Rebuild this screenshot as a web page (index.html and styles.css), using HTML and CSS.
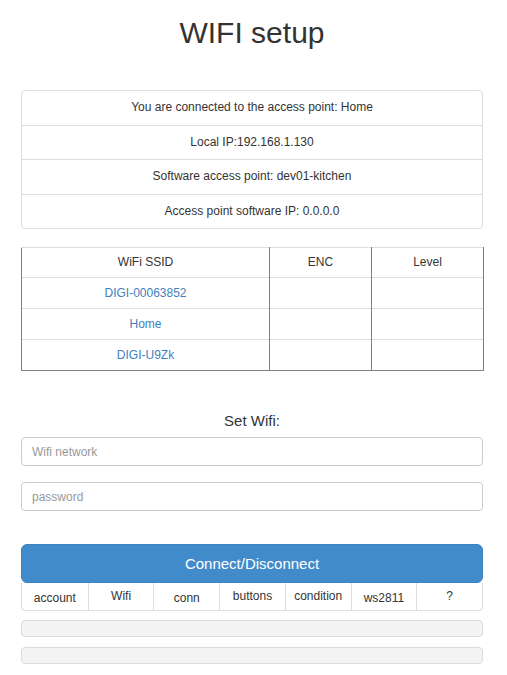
FILE: index.html
```html
<!DOCTYPE html>
<html>
<head>
<meta charset="utf-8">
<link rel="stylesheet" href="styles.css">
</head>
<body>
<div class="page">
  <h1 class="title">WIFI setup</h1>
  <ul class="info">
    <li>You are connected to the access point: Home</li>
    <li>Local IP:192.168.1.130</li>
    <li>Software access point: dev01-kitchen</li>
    <li>Access point software IP: 0.0.0.0</li>
  </ul>
  <table class="nets">
    <colgroup><col class="c1"><col class="c2"><col class="c3"></colgroup>
    <tr><td>WiFi SSID</td><td>ENC</td><td>Level</td></tr>
    <tr><td><a href="#">DIGI-00063852</a></td><td></td><td></td></tr>
    <tr><td><a href="#">Home</a></td><td></td><td></td></tr>
    <tr><td><a href="#">DIGI-U9Zk</a></td><td></td><td></td></tr>
  </table>
  <div class="setlabel">Set Wifi:</div>
  <input class="field" type="text" placeholder="Wifi network">
  <input class="field second" type="password" placeholder="password">
  <button class="connect">Connect/Disconnect</button>
  <div class="tabs">
    <span class="tab">account</span>
    <span class="tab up">Wifi</span>
    <span class="tab">conn</span>
    <span class="tab up">buttons</span>
    <span class="tab up">condition</span>
    <span class="tab">ws2811</span>
    <span class="tab up">?</span>
  </div>
  <div class="bar first"></div>
  <div class="bar"></div>
</div>
</body>
</html>
```
FILE: styles.css
```css
html, body {
  margin: 0;
  padding: 0;
  background: #fff;
}
body {
  font-family: "Liberation Sans", Arial, sans-serif;
  font-size: 12px;
  color: #333;
}
.page {
  width: 462px;
  margin-left: 21px;
  padding-bottom: 10px;
}
.title {
  margin: 16px 0 0;
  font-size: 30px;
  line-height: 33px;
  font-weight: normal;
  text-align: center;
  color: #333;
}
.info {
  list-style: none;
  margin: 41px 0 0;
  padding: 0;
  border: 1px solid #ddd;
  border-radius: 4px;
}
.info li {
  text-align: center;
  padding: 8px 15px;
  line-height: 17.5px;
  border-top: 1px solid #ddd;
}
.info li:first-child {
  border-top: none;
}
.nets {
  margin-top: 18px;
  width: 462px;
  border-collapse: collapse;
  table-layout: fixed;
}
.c1 { width: 248px; }
.c2 { width: 102px; }
.c3 { width: 112px; }
.nets td {
  text-align: center;
  padding: 6px 8px;
  line-height: 18px;
  border-top: 1px solid #ddd;
  border-left: 1px solid #808080;
  border-right: 1px solid #808080;
}
.nets tr:first-child td {
  padding-top: 5px;
}
.nets tr:last-child td {
  border-bottom: 1px solid #808080;
}
.nets a {
  color: #3f80c0;
  text-decoration: none;
}
.setlabel {
  margin-top: 40px;
  text-align: center;
  font-size: 15px;
  line-height: 20px;
}
.field {
  display: block;
  box-sizing: border-box;
  width: 462px;
  height: 29px;
  margin: 6px 0 0;
  padding: 0 10px;
  border: 1px solid #ccc;
  border-radius: 4px;
  font-family: "Liberation Sans", Arial, sans-serif;
  font-size: 12px;
  color: #555;
  background: #fff;
}
.field::placeholder {
  color: #999;
}
.field.second {
  margin-top: 16px;
}
.connect {
  display: block;
  box-sizing: border-box;
  width: 462px;
  height: 39px;
  margin-top: 33px;
  border: 1px solid #3c84c4;
  border-radius: 6px;
  background: #428bca;
  color: #fff;
  font-family: "Liberation Sans", Arial, sans-serif;
  font-size: 15px;
  padding: 0;
}
.tabs {
  display: grid;
  grid-template-columns: repeat(7, 1fr);
  height: 28px;
  box-sizing: border-box;
  border: 1px solid #ddd;
  border-top: none;
  border-radius: 0 0 4px 4px;
}
.tab {
  display: flex;
  align-items: center;
  justify-content: center;
  padding-top: 2px;
  border-left: 1px solid #ddd;
  font-size: 12px;
  color: #333;
}
.tab:first-child {
  border-left: none;
}
.tab.up {
  padding-top: 0;
  padding-bottom: 1px;
}
.bar {
  box-sizing: border-box;
  height: 17px;
  margin-top: 10px;
  background: #f3f3f3;
  border: 1px solid #dcdcdc;
  border-radius: 4px;
}
.bar.first {
  margin-top: 9px;
}
```
